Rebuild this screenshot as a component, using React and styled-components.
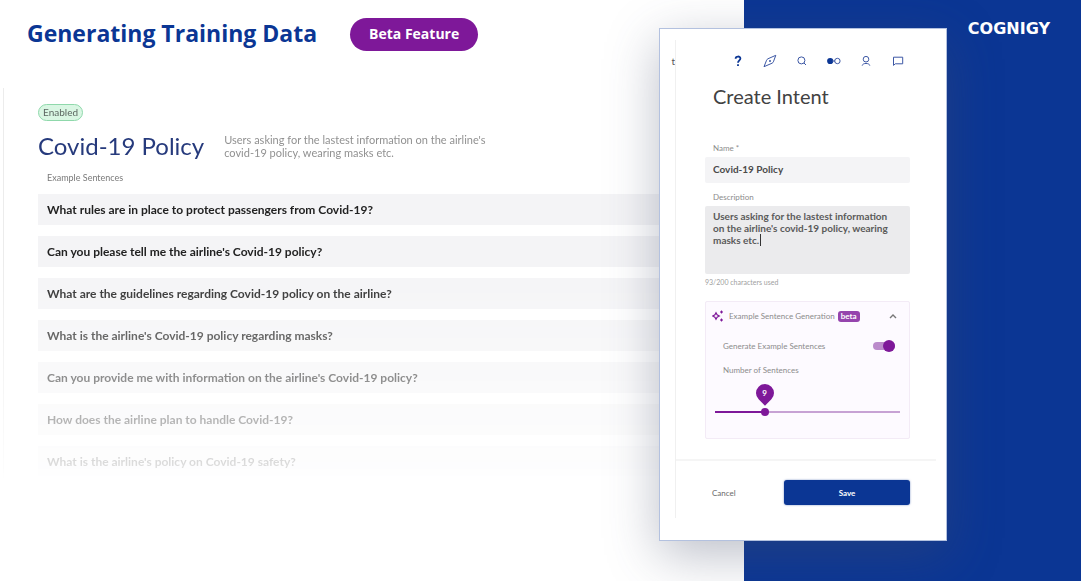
import React, { useState } from "react";
import styled, { createGlobalStyle } from "styled-components";

const blue = "#0b3694";
const purple = "#7e1899";

const GlobalStyle = createGlobalStyle`
  *, *::before, *::after { box-sizing: border-box; }
  body { margin: 0; background: #fff; font-family: Lato, "Liberation Sans", sans-serif; }
  h1, h2, p, ul { margin: 0; padding: 0; }
  button, input, textarea { font: inherit; }
`;

const Page = styled.div`
  display: grid;
  grid-template-columns: minmax(0, 1fr) 85px 203px 134px;
  grid-template-rows: auto;
  min-height: 100vh;
  overflow: hidden;
`;

const Main = styled.main`
  grid-column: 1;
  grid-row: 1;
  display: flex;
  flex-direction: column;
  padding-top: 18px;
`;

const BrandBand = styled.aside`
  grid-column: 3 / 5;
  grid-row: 1;
  display: flex;
  justify-content: flex-end;
  align-items: flex-start;
  padding: 20px 31px;
  background: ${blue};
`;

const Wordmark = styled.span`
  font: 700 16px/18px "DejaVu Sans", sans-serif;
  color: #fff;
`;

const TitleBar = styled.header`
  display: flex;
  align-items: flex-start;
  gap: 33px;
  height: 33px;
  padding-left: 27px;
  font-family: "Open Sans", "Liberation Sans", sans-serif;
`;

const Title = styled.h1`
  color: ${blue};
  font-size: 23px;
  line-height: 30px;
  font-weight: 700;
  white-space: nowrap;
`;

const FeatureBadge = styled.span`
  padding: 0 19px 2px;
  border-radius: 17px;
  background: ${purple};
  color: #fff;
  font-size: 14px;
  line-height: 31px;
  font-weight: 700;
  white-space: nowrap;
`;

const IntentPanel = styled.section`
  margin: 37px 0 0 3px;
  padding: 16px 0 3px 34px;
  border-left: 1px solid #ececec;
  mask-image: linear-gradient(#000 44%, rgba(0, 0, 0, 0.14) 97%, transparent);
`;

const StatusPill = styled.span`
  display: block;
  width: fit-content;
  padding: 0 4px;
  border: 1px solid #8fd8ab;
  border-radius: 9px;
  background: #d9f6e3;
  color: #5c6661;
  font-size: 10px;
  line-height: 15px;
`;

const IntentHeading = styled.div`
  display: flex;
  align-items: center;
  gap: 20px;
  margin-top: 9px;
`;

const IntentName = styled.h2`
  color: #263a7c;
  font-size: 24px;
  line-height: 32px;
  font-weight: 400;
  white-space: nowrap;
`;

const IntentText = styled.p`
  max-width: 268px;
  color: #919191;
  font-size: 11px;
  line-height: 13px;
`;

const ListCaption = styled.p`
  margin: 10px 0;
  padding-left: 9px;
  color: #7a7a7a;
  font-size: 9px;
  line-height: 12px;
`;

const SentenceList = styled.ul`
  display: grid;
  gap: 11px;
  list-style: none;
`;

const Sentence = styled.li`
  padding-left: 9px;
  background: #f4f4f6;
  color: #222;
  font-size: 12px;
  line-height: 31px;
  font-weight: 700;
`;

const Dialog = styled.section`
  grid-column: 2 / 4;
  grid-row: 1;
  align-self: start;
  z-index: 1;
  display: grid;
  grid-template-columns: 15px minmax(0, 1fr);
  margin-top: 28px;
  padding: 11px 10px 22px 0;
  border: 1px solid #b3c1df;
  background: #fff;
  box-shadow: 0 14px 48px rgba(70, 78, 105, 0.36);
`;

const Gutter = styled.span`
  padding-top: 15px;
  color: #555;
  font-size: 10px;
  line-height: 12px;
  text-align: right;
`;

const DialogBody = styled.div`
  border-left: 1px solid #f0f0f0;
`;

const Toolbar = styled.nav`
  display: flex;
  justify-content: space-between;
  padding: 13px 30px 0 54px;
`;

const ToolButton = styled.button`
  display: grid;
  place-items: center;
  width: 16px;
  height: 16px;
  padding: 0;
  border: 0;
  background: none;
  color: #3d58a5;
  svg { display: block; width: 16px; height: 16px; }
`;

const Form = styled.form`
  display: flex;
  flex-direction: column;
`;

const Fields = styled.div`
  display: flex;
  flex-direction: column;
  padding: 0 26px 20px 29px;
  border-bottom: 2px solid #f5f5f5;
`;

const DialogTitle = styled.h2`
  padding: 14px 0 0 37px;
  color: #424242;
  font-size: 20px;
  line-height: 26px;
  font-weight: 400;
`;

const FieldLabel = styled.label`
  margin-top: ${(p) => (p.$first ? 32 : 8)}px;
  padding-left: 8px;
  color: #8c8c8c;
  font-size: 8px;
  line-height: ${(p) => (p.$first ? 14 : 12)}px;
`;

const TextInput = styled.input`
  width: 100%;
  height: 26px;
  margin-top: 2px;
  padding: 0 8px 2px;
  border: 0;
  border-radius: 2px;
  outline: 0;
  background: #f4f4f6;
  color: #4a4a4a;
  font-size: 10px;
  font-weight: 700;
`;

const TextAreaWrap = styled.div`
  position: relative;
  margin-top: 3px;
`;

const TextArea = styled.textarea`
  display: block;
  width: 100%;
  height: 68px;
  padding: 4px 14px 4px 8px;
  border: 0;
  border-radius: 2px;
  outline: 0;
  resize: none;
  background: #ebebed;
  color: #5a5a5a;
  font-size: 10px;
  line-height: 12px;
  font-weight: 700;
`;

const Caret = styled.span`
  position: absolute;
  left: 55px;
  top: 28px;
  width: 1px;
  height: 12px;
  background: #333;
`;

const Counter = styled.p`
  margin-top: 2px;
  color: #a0a0a0;
  font-size: 7px;
  line-height: 12px;
`;

const Generator = styled.div`
  margin-top: 13px;
  padding: 5px 10px 20px 6px;
  border: 1px solid #f3ebf6;
  border-radius: 2px;
  background: #fdfaff;
`;

const GeneratorHead = styled.div`
  display: flex;
  align-items: center;
  height: 18px;
  color: #8c8c8c;
  font-size: 8px;
  > svg { flex: none; }
`;

const GeneratorTitle = styled.span`
  margin: 0 3px 0 5px;
  white-space: nowrap;
`;

const BetaTag = styled.span`
  padding: 0 3px;
  border-radius: 3px;
  background: #9544ad;
  color: #fff;
  font-size: 8px;
  line-height: 11px;
  font-weight: 700;
`;

const CollapseButton = styled.button`
  margin-left: auto;
  padding: 0;
  border: 0;
  background: none;
  color: #777;
  svg { display: block; }
`;

const SettingRow = styled.div`
  display: flex;
  justify-content: space-between;
  align-items: center;
  height: 14px;
  margin-top: ${(p) => p.$gap}px;
  padding: 0 4px 0 11px;
  color: #8c8c8c;
  font-size: 8px;
`;

const Toggle = styled.input`
  appearance: none;
  display: flex;
  align-items: center;
  justify-content: flex-end;
  width: 22px;
  height: 8px;
  margin: 0;
  border-radius: 4px;
  background: #bb8bcb;
  &::before {
    content: "";
    width: 12px;
    height: 12px;
    flex: none;
    border-radius: 50%;
    background: ${purple};
  }
  &:not(:checked) { justify-content: flex-start; }
`;

const SliderWrap = styled.div`
  position: relative;
  margin: 29px -1px 0 3px;
`;

const Slider = styled.input`
  appearance: none;
  display: block;
  width: 100%;
  height: 12px;
  margin: 0;
  background: linear-gradient(90deg, ${purple} var(--fill), #c7a2d4 var(--fill)) center / 100% 2px no-repeat;
  &::-webkit-slider-thumb {
    appearance: none;
    width: 8px;
    height: 8px;
    border-radius: 50%;
    background: ${purple};
  }
`;

const ValuePin = styled.output`
  position: absolute;
  bottom: 16px;
  z-index: 0;
  width: 18px;
  height: 18px;
  margin-left: -9px;
  color: #fff;
  font-size: 8px;
  line-height: 18px;
  font-weight: 700;
  text-align: center;
  &::before {
    content: "";
    position: absolute;
    inset: 0;
    z-index: -1;
    border-radius: 50% 50% 0 50%;
    background: ${purple};
    transform: rotate(45deg);
  }
`;

const Actions = styled.footer`
  display: flex;
  justify-content: space-between;
  align-items: center;
  padding: 19px 26px 13px 29px;
`;

const CancelButton = styled.button`
  padding: 0 7px;
  border: 0;
  background: none;
  color: #6a6a6a;
  font-size: 8px;
`;

const SaveButton = styled.button`
  width: 126px;
  height: 25px;
  padding: 0;
  border: 0;
  border-radius: 3px;
  background: ${blue};
  box-shadow: 0 0 2px rgba(11, 54, 148, 0.6);
  color: #fff;
  font-size: 8px;
  font-weight: 700;
`;

const sentences = [
  "What rules are in place to protect passengers from Covid-19?",
  "Can you please tell me the airline's Covid-19 policy?",
  "What are the guidelines regarding Covid-19 policy on the airline?",
  "What is the airline's Covid-19 policy regarding masks?",
  "Can you provide me with information on the airline's Covid-19 policy?",
  "How does the airline plan to handle Covid-19?",
  "What is the airline's policy on Covid-19 safety?",
];

const line = { fill: "none", stroke: "currentColor", strokeWidth: 1 };

const tools = [
  ["Help", <path d="M5.6 5.8C5.6 2.8 10.4 2.8 10.4 5.6C10.4 7.4 8 7.4 8 9.8M8 11.2V13" {...line} stroke={blue} strokeWidth="1.8" />],
  ["Explore", <g {...line}><path d="M2 13.7L4.6 7.2Q5 6.3 5.9 5.8L13.8 2.3L11.4 8.8Q11 9.7 10.1 10.2Z" /><circle cx="8" cy="8" r="1" fill="currentColor" stroke="none" /></g>],
  ["Search", <g {...line}><circle cx="7.4" cy="7.4" r="3.5" /><path d="M10 10L12 12" /></g>],
  ["Toggle view", <g><circle cx="4.2" cy="8" r="3.1" fill={blue} /><path d="M6 8H9" {...line} /><circle cx="11.4" cy="8" r="2.7" {...line} /></g>],
  ["Profile", <g {...line}><circle cx="8" cy="6.2" r="2.8" /><path d="M4.2 12.6C4.6 9.7 11.4 9.7 11.8 12.6" /></g>],
  ["Messages", <path d="M3.5 12.4V4.2H12.7V10.8H5.3Z" {...line} />],
];

const MIN = 1;
const MAX = 32;

export default function App() {
  const [count, setCount] = useState(9);
  const [enabled, setEnabled] = useState(true);
  const ratio = (count - MIN) / (MAX - MIN);
  const fill = `calc(4px + (100% - 8px) * ${ratio})`;

  return (
    <Page>
      <GlobalStyle />
      <Main>
        <TitleBar>
          <Title>Generating Training Data</Title>
          <FeatureBadge>Beta Feature</FeatureBadge>
        </TitleBar>
        <IntentPanel>
          <StatusPill>Enabled</StatusPill>
          <IntentHeading>
            <IntentName>Covid-19 Policy</IntentName>
            <IntentText>
              Users asking for the lastest information on the airline's covid-19 policy, wearing masks etc.
            </IntentText>
          </IntentHeading>
          <ListCaption>Example Sentences</ListCaption>
          <SentenceList>
            {sentences.map((text) => (
              <Sentence key={text}>{text}</Sentence>
            ))}
          </SentenceList>
        </IntentPanel>
      </Main>

      <BrandBand>
        <Wordmark>COGNIGY</Wordmark>
      </BrandBand>

      <Dialog aria-labelledby="dialog-title">
        <Gutter>t</Gutter>
        <DialogBody>
          <Toolbar>
            {tools.map(([name, drawing]) => (
              <ToolButton key={name} type="button" aria-label={name}>
                <svg viewBox="0 0 16 16" aria-hidden="true">{drawing}</svg>
              </ToolButton>
            ))}
          </Toolbar>
          <DialogTitle id="dialog-title">Create Intent</DialogTitle>
          <Form onSubmit={(e) => e.preventDefault()}>
            <Fields>
              <FieldLabel $first htmlFor="name">Name *</FieldLabel>
              <TextInput id="name" defaultValue="Covid-19 Policy" />
              <FieldLabel htmlFor="description">Description</FieldLabel>
              <TextAreaWrap>
                <TextArea
                  id="description"
                  defaultValue="Users asking for the lastest information on the airline's covid-19 policy, wearing masks etc."
                />
                <Caret />
              </TextAreaWrap>
              <Counter>93/200 characters used</Counter>
              <Generator>
                <GeneratorHead>
                  <svg width="12" height="12" viewBox="0 0 12 12" aria-hidden="true">
                    <path d="M4 2.8L5.1 4.9L7.2 6L5.1 7.1L4 9.2L2.9 7.1L0.8 6L2.9 4.9Z" fill="none" stroke={purple} strokeWidth="1.2" />
                    <path d="M9.5 0.2L11 2L9.5 3.8L8 2ZM9.5 8.2L11 10L9.5 11.8L8 10Z" fill={purple} />
                  </svg>
                  <GeneratorTitle>Example Sentence Generation</GeneratorTitle>
                  <BetaTag>beta</BetaTag>
                  <CollapseButton type="button" aria-label="Collapse">
                    <svg width="12" height="12" viewBox="0 0 12 12" aria-hidden="true">
                      <path d="M3 8L6 5L9 8" {...line} strokeWidth="1.4" />
                    </svg>
                  </CollapseButton>
                </GeneratorHead>
                <SettingRow $gap={14}>
                  <label htmlFor="generate">Generate Example Sentences</label>
                  <Toggle
                    id="generate"
                    type="checkbox"
                    checked={enabled}
                    onChange={(e) => setEnabled(e.target.checked)}
                  />
                </SettingRow>
                <SettingRow $gap={10}>
                  <label htmlFor="count">Number of Sentences</label>
                </SettingRow>
                <SliderWrap>
                  <ValuePin htmlFor="count" style={{ left: fill }}>{count}</ValuePin>
                  <Slider
                    id="count"
                    type="range"
                    min={MIN}
                    max={MAX}
                    value={count}
                    onChange={(e) => setCount(Number(e.target.value))}
                    style={{ "--fill": fill }}
                  />
                </SliderWrap>
              </Generator>
            </Fields>
            <Actions>
              <CancelButton type="button">Cancel</CancelButton>
              <SaveButton type="submit">Save</SaveButton>
            </Actions>
          </Form>
        </DialogBody>
      </Dialog>
    </Page>
  );
}
